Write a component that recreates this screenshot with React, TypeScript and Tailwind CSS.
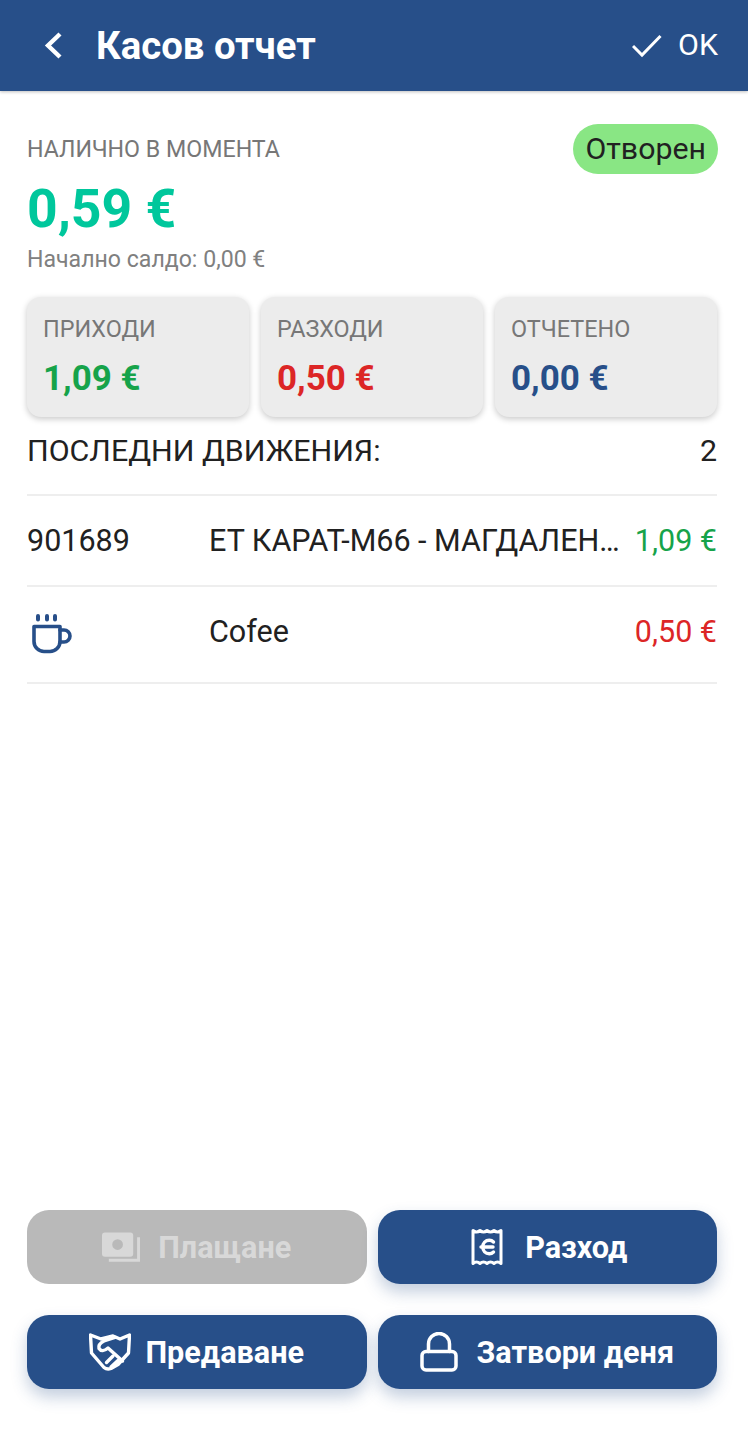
const blue = "bg-[#274f89]";

function PaymentsIcon() {
  return (
    <svg width="39" height="30" viewBox="0 0 40 30" fill="currentColor">
      <path fillRule="evenodd" d="M3 0h26a3 3 0 0 1 3 3v19a3 3 0 0 1-3 3H3a3 3 0 0 1-3-3V3a3 3 0 0 1 3-3zm13 7a5.500 5.500 0 1 0 0 11 5.500 5.500 0 0 0 0-11z" />
      <path d="M36 5h3v25H7v-3h29z" />
    </svg>
  );
}

function ReceiptEuro() {
  return (
    <svg width="32" height="38" viewBox="0 0 32 38" fill="none" stroke="currentColor" strokeWidth="3" strokeLinejoin="round" strokeLinecap="round">
      <path d="M2 2.500c2.300 2 4.700 2 7 0 2.300 2 4.700 2 7 0 2.300 2 4.700 2 7 0 2.300 2 4.700 2 7 0v33c-2.300-2-4.700-2-7 0-2.300-2-4.700-2-7 0-2.300-2-4.700-2-7 0-2.300-2-4.700-2-7 0z" />
      <path d="M22.500 14c-1.100-1.100-2.500-1.700-4.200-1.700-3.800 0-6.500 2.900-6.500 6.700s2.700 6.700 6.500 6.700c1.700 0 3.100-.6 4.200-1.700" strokeWidth="3.400" />
      <path d="M10 19h12" strokeWidth="3.400" />
    </svg>
  );
}

function HandshakeIcon() {
  return (
    <svg width="42" height="38" viewBox="9 8 42 38" fill="none" stroke="currentColor" strokeWidth="3.400" strokeLinejoin="round" strokeLinecap="round">
      <path d="M10.500 10 L21 14 L33 11 L40 14 L49.500 10 L48.500 28 L38 39.500 L31 43.500 Q27 45 24 42.500 L11.500 28 Z" />
      <path d="M35 12.500 L24 16 Q18 19 19 23.500 Q22 28 28 23 L42.500 36" />
      <path d="M33 31 L26.500 37.500 M38 35.500 L31 42" />
    </svg>
  );
}

function LockIcon() {
  return (
    <svg width="38" height="40" viewBox="0 0 38 40" fill="none" stroke="currentColor" strokeWidth="3.500" strokeLinejoin="round" strokeLinecap="round">
      <rect x="2" y="19.500" width="34" height="18.500" rx="4" />
      <path d="M8.500 19.500v-7.500a10.500 10.500 0 0 1 21 0v7.500" />
    </svg>
  );
}

function CupIcon() {
  return (
    <svg width="46" height="46" viewBox="0 0 46 46" fill="none" stroke="#274f89" strokeLinecap="round" strokeLinejoin="round" className="block">
      <path d="M11 4v3.500M20 4v3.500M28 4v3.500" strokeWidth="4" />
      <path d="M7 14.500h26v15a10 10 0 0 1-10 10h-6a10 10 0 0 1-10-10z" strokeWidth="3.600" />
      <path d="M33 18h4a6 6 0 0 1 0 12h-4" strokeWidth="3.600" />
    </svg>
  );
}

function Stat({ label, value, color }: { label: string; value: string; color: string }) {
  return (
    <div className="flex-1 h-[120px] rounded-[14px] bg-[#ececec] px-4 pt-[16px] shadow-[0_2px_6px_rgba(0,0,0,0.22)]">
      <div className="text-[23.4px] leading-[32px] text-[#777777]">{label}</div>
      <div className={`mt-[14px] text-[35px] leading-[40px] font-bold ${color}`}>{value}</div>
    </div>
  );
}

function ActionButton({ icon, label, disabled, gap, shift }: { icon: React.ReactNode; label: string; disabled?: boolean; gap: string; shift?: string }) {
  return (
    <button
      className={`h-[74px] rounded-[22px] flex items-center justify-center ${gap} ${shift ?? ""} text-[30.6px] font-bold ${
        disabled ? "bg-[#b9b9b9] text-[#d8d8d8]" : `${blue} text-white shadow-[0_8px_16px_rgba(39,79,137,0.28)]`
      }`}
    >
      {icon}
      <span className="pt-[2px]">{label}</span>
    </button>
  );
}

export default function App() {
  return (
    <div className="h-[1430px] w-[748px] bg-white flex flex-col font-['Roboto',sans-serif] overflow-hidden">
      <header className={`${blue} h-[91px] shrink-0 flex items-center pl-[44px] pr-[30px] text-white shadow-[0_1px_3px_rgba(0,0,0,0.25)]`}>
        <svg width="20" height="30" viewBox="0 0 20 30" fill="none" stroke="white" strokeWidth="4.400" strokeLinecap="butt" strokeLinejoin="miter">
          <path d="M16 3 L4 14.500 L16 26" />
        </svg>
        <h1 className="ml-[32px] pt-[2px] text-[38.3px] font-bold leading-none">Касов отчет</h1>
        <div className="ml-auto flex items-center gap-[16px]">
          <svg width="30" height="24" viewBox="0 0 30 24" fill="none" stroke="white" strokeWidth="3">
            <path d="M1 12 L10 21 L28.500 2" />
          </svg>
          <span className="text-[30.4px] leading-none">OK</span>
        </div>
      </header>

      <main className="flex-1 flex flex-col pl-[27px] pr-[31px]">
        <div className="mt-[33px] flex items-start justify-between">
          <div>
            <div className="mt-[10px] text-[23.2px] leading-[30px] text-[#777777]">НАЛИЧНО В МОМЕНТА</div>
            <div className="mt-[15px] text-[53.5px] leading-[60px] font-bold text-[#00c79c]">0,59 €</div>
            <div className="mt-[6px] text-[23.1px] leading-[30px] text-[#808080]">Начално салдо: 0,00 €</div>
          </div>
          <div className="h-[50px] rounded-full bg-[#89e684] px-[12px] -mr-[1px] flex items-center text-[30.3px] text-[#212121]">Отворен</div>
        </div>

        <div className="mt-[22px] flex gap-3">
          <Stat label="ПРИХОДИ" value="1,09 €" color="text-[#16a34a]" />
          <Stat label="РАЗХОДИ" value="0,50 €" color="text-[#dc2626]" />
          <Stat label="ОТЧЕТЕНО" value="0,00 €" color="text-[#274f89]" />
        </div>

        <div className="mt-[14px] flex justify-between text-[30.4px] leading-[40px] text-[#212121]">
          <span>ПОСЛЕДНИ ДВИЖЕНИЯ:</span>
          <span>2</span>
        </div>

        <div className="mt-[23px] border-t-2 border-[#eeeeee] h-[91px] flex items-center text-[30.5px] text-[#212121]">
          <span className="w-[182px] shrink-0">901689</span>
          <span className="flex-1 min-w-0 truncate">ЕТ КАРАТ-М66 - МАГДАЛЕН…</span>
          <span className="ml-[12px] text-[#16a34a]">1,09 €</span>
        </div>
        <div className="border-t-2 border-b-2 border-[#eeeeee] h-[99px] flex items-center text-[30.5px] text-[#212121]">
          <span className="w-[182px] shrink-0"><CupIcon /></span>
          <span className="flex-1 pb-[6px]">Cofee</span>
          <span className="pb-[6px] text-[#dc2626]">0,50 €</span>
        </div>

        <div className="mt-auto mb-[41px] grid grid-cols-2 gap-x-[11px] gap-y-[31px]">
          <ActionButton disabled gap="gap-[17px]" icon={<PaymentsIcon />} label="Плащане" />
          <ActionButton gap="gap-[22px]" shift="pl-[4px]" icon={<ReceiptEuro />} label="Разход" />
          <ActionButton gap="gap-[14px]" icon={<HandshakeIcon />} label="Предаване" />
          <ActionButton gap="gap-[18px]" icon={<LockIcon />} label="Затвори деня" />
        </div>
      </main>
    </div>
  );
}
